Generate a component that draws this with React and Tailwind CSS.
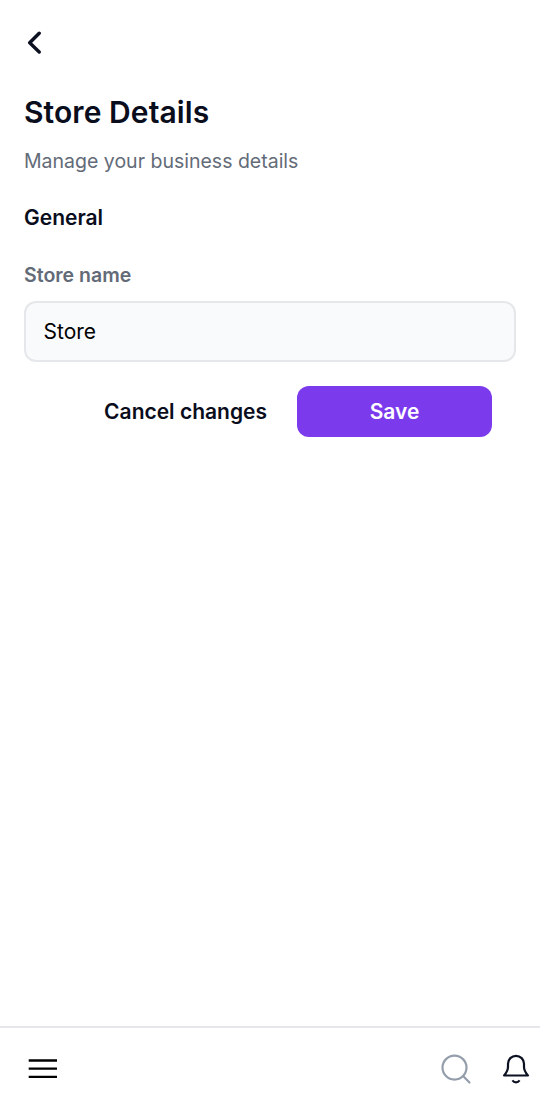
function BackIcon() {
  return (
    <svg className="block h-6 w-6" viewBox="0 0 24 24" fill="none" stroke="#0c1122" strokeWidth="3.4" strokeLinecap="round" strokeLinejoin="round">
      <path d="M15.2 3.2 5.7 12.8l9.5 9.2" />
    </svg>
  );
}

function MenuIcon() {
  return (
    <svg className="block h-6 w-[30px]" viewBox="0 0 30 24" fill="none" stroke="#000" strokeWidth="2.3">
      <path d="M.7 3.5H29M.7 11.65H29M.7 19.85H29" />
    </svg>
  );
}

function SearchIcon() {
  return (
    <svg className="block h-8 w-8" viewBox="0 0 32 32" fill="none" stroke="#949eab" strokeWidth="2.2" strokeLinecap="round">
      <circle cx="14.5" cy="14.6" r="12" />
      <path d="m23.3 23.3 6.2 6.2" />
    </svg>
  );
}

function BellIcon() {
  return (
    <svg className="block h-8 w-8" viewBox="0 0 32 32" fill="none" stroke="#0c1122" strokeWidth="2.2" strokeLinecap="butt" strokeLinejoin="round">
      <path d="M4.1 22.5C6.5 19.6 8 17 8 14v-3.2a8 8 0 0 1 16 0V14c0 3 1.5 5.6 3.9 8.5Z" />
      <path d="M12.4 27.4c1.9 2.6 5.3 2.6 7.2 0" />
    </svg>
  );
}

export default function App() {
  return (
    <div className="flex h-[1110px] w-[540px] flex-col bg-white font-['Inter',sans-serif] text-[#0a0d1c]">
      <main className="flex-1 px-6 pt-[30px]">
        <button aria-label="Back" className="block">
          <BackIcon />
        </button>
        <h1 className="mt-[38px] text-[30px] leading-10 font-semibold tracking-[0.08px]">Store Details</h1>
        <p className="mt-[14px] text-[19.5px] leading-[30px] text-[#636b78]">Manage your business details</p>
        <h2 className="mt-[27px] text-[21px] leading-[30px] font-semibold">General</h2>
        <label htmlFor="store-name" className="mt-[27px] block text-[19.5px] leading-[30px] font-semibold text-[#636b78]">
          Store name
        </label>
        <input
          id="store-name"
          defaultValue="Store"
          className="mt-[11px] block h-[61px] w-full rounded-xl border-2 border-[#e5e7eb] bg-[#f9fafc] px-[17.5px] text-[21px] text-black outline-none"
        />
        <div className="mt-[23.5px] flex justify-end pr-6">
          <button className="mr-[30px] pt-px text-[21px] font-semibold">Cancel changes</button>
          <button className="h-[51px] w-[195px] rounded-xl bg-[#7c3aed] pt-px text-[21px] font-semibold text-white">Save</button>
        </div>
      </main>
      <nav className="flex h-[84px] items-center border-t-2 border-[#e5e7eb] pr-2 pl-7">
        <button aria-label="Menu">
          <MenuIcon />
        </button>
        <div className="ml-auto flex gap-7">
          <button aria-label="Search">
            <SearchIcon />
          </button>
          <button aria-label="Notifications">
            <BellIcon />
          </button>
        </div>
      </nav>
    </div>
  );
}
